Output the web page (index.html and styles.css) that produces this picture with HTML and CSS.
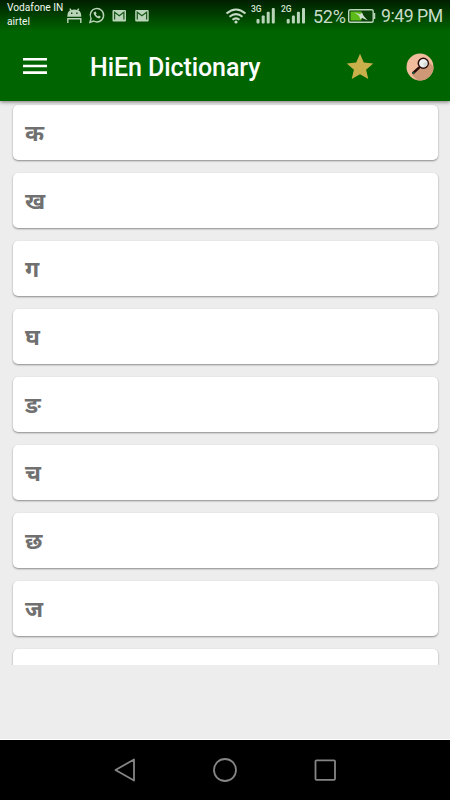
FILE: index.html
```html
<!DOCTYPE html>
<html lang="hi">
<head>
<meta charset="utf-8">
<title>HiEn Dictionary</title>
<link rel="stylesheet" href="styles.css">
</head>
<body>
<div class="phone">
  <header class="top">
    <div class="status">
      <div class="carrier"><span>Vodafone IN</span><span>airtel</span></div>
      <svg class="notices" width="90" height="32" viewBox="0 0 90 32" fill="none" stroke="#b9d4b9" stroke-width="1.4">
        <path d="M5 16C5 12 7.500 10.300 11.300 10.300s6.300 1.700 6.300 5.700z" fill="#b9d4b9"/>
        <path d="M6.800 8.600l1.700 2.400M15.800 8.600l-1.700 2.400M4.800 23v-4.200h13V23"/>
        <path d="M8.700 12.500v1.600M13.900 12.500v1.600" stroke="#0a460a"/>
        <path d="M27 22.300l1.100-3.800a6.700 6.700 0 1 1 2.500 2.500z"/>
        <path d="M30.800 12.200c-1.200 2 3.600 7 6 6l1-1.500-2-1.100-1 .8-2-2 .8-1-1-2z" fill="#b9d4b9" stroke="none"/>
        <g id="mail"><rect x="49.500" y="10" width="13.500" height="11.500" rx="1" fill="#b9d4b9" stroke="none"/><path d="M51.600 19.500v-7.300l4.650 3.600 4.650-3.600v7.300" stroke="#1a5a1a" stroke-width="1.250"/></g>
        <use href="#mail" x="22.700"/>
      </svg>
      <div class="gap"></div>
      <svg class="signals" width="84" height="32" viewBox="0 0 84 32">
        <g fill="none" stroke="#c7dcc7" stroke-width="2"><path d="M1.500 13.500Q11 5.500 20.500 13.500M4.500 16.700Q11 11.500 17.500 16.700M7.500 19.700Q11 17 14.500 19.700"/></g>
        <circle cx="11" cy="22" r="1.600" fill="#c7dcc7"/>
        <g id="bars" fill="#b9d4b9"><rect x="31.500" y="19" width="3" height="4.500" rx="1"/><rect x="36.700" y="15.500" width="3" height="8" rx="1"/><rect x="41.700" y="11.800" width="3" height="11.700" rx="1"/><rect x="46.800" y="8" width="3" height="15.500" rx="1"/></g>
        <use href="#bars" x="30.200"/>
        <g class="net"><text x="26" y="11.500">3G</text><text x="56" y="11.500">2G</text></g>
      </svg>
      <span class="percent">52%</span>
      <svg class="battery" width="29" height="32" viewBox="0 0 29 32">
        <rect x="1.700" y="9.700" width="24.500" height="12.600" rx="1.500" fill="#084008" stroke="#b9d4b9" stroke-width="1.400"/>
        <path d="M27.500 13v6" stroke="#b9d4b9" stroke-width="1.500"/>
        <rect x="3.500" y="11.500" width="11" height="9" fill="#5dbb19"/>
        <path d="M7.500 12.500l5.500 1.700 2-1.700 1.700 3.500 4 4.500-5.500-2.500-1.700 1.200-1.500-3.500z" fill="#d0dfd0"/>
      </svg>
      <span class="clock">9:49 PM</span>
    </div>
    <div class="toolbar">
      <svg class="menu" width="24" height="18" viewBox="0 0 24 18" fill="#fff"><path d="M0 0h24v2.600H0zM0 6.700h24v2.600H0zM0 13.300h24V16H0z"/></svg>
      <h1>HiEn Dictionary</h1>
      <svg class="star" width="28" height="28" viewBox="0 0 28 28"><path fill="#c9b04b" d="M14 .8l3.800 8.800 9.400.9-7.100 6.300 2.200 9.300L14 21.300l-8.300 4.800 2.200-9.300L.8 10.500l9.400-.9z"/></svg>
      <svg class="search" width="28" height="28" viewBox="0 0 28 28">
        <defs><clipPath id="disc"><circle cx="14" cy="14" r="13.500"/></clipPath></defs>
        <circle cx="14" cy="14" r="13.500" fill="#f2bd9c"/>
        <path clip-path="url(#disc)" d="M21 7l9 9v14H14l-8-8z" fill="#cd9875"/>
        <path d="M13 14.700l-5.800 5.300" stroke="#2b0c0a" stroke-width="2.400" stroke-linecap="round"/>
        <path d="M6.800 20.500l1.400-1.300" stroke="#176442" stroke-width="2"/>
        <circle cx="17.300" cy="10.300" r="5" fill="#edf1ee" stroke="#2b0c0a" stroke-width="1.500"/>
        <path d="M17.300 10.300l4-1.700v3.500l-3.500 2.500z" fill="#d5dbd8"/>
      </svg>
    </div>
  </header>
  <main class="list">
    <div class="card">क</div>
    <div class="card">ख</div>
    <div class="card">ग</div>
    <div class="card">घ</div>
    <div class="card">ङ</div>
    <div class="card">च</div>
    <div class="card">छ</div>
    <div class="card">ज</div>
    <div class="card"></div>
  </main>
  <div class="blank"></div>
  <nav class="nav">
    <svg width="24" height="26" viewBox="0 0 24 26"><path d="M21 2.500v21L2.500 13z"/></svg>
    <svg width="26" height="26" viewBox="0 0 26 26"><circle cx="13" cy="13" r="11"/></svg>
    <svg width="24" height="26" viewBox="0 0 24 26"><rect x="2.500" y="3.300" width="19.500" height="19.500" rx="1"/></svg>
  </nav>
</div>
</body>
</html>
```
FILE: styles.css
```css
* { box-sizing: border-box; }
body { margin: 0; background: #ededed; font-family: Roboto, "Noto Sans", sans-serif; }
svg { display: block; flex: none; }
.phone { width: 450px; height: 800px; display: flex; flex-direction: column; overflow: hidden; }
.top {
  position: relative;
  flex: none;
  height: 101px;
  background: linear-gradient(#001f00, #006500 32px);
  box-shadow: 0 1px 4px rgba(0, 0, 0, .5);
}
.status { display: flex; height: 32px; color: #c7dcc7; white-space: nowrap; }
.carrier {
  display: flex;
  flex-direction: column;
  width: 56px;
  margin-left: 7px;
  padding-top: 1px;
  font-size: 10.200px;
  line-height: 13.500px;
  color: #f2f7f2;
}
.gap { flex: 1; }
.signals { margin-right: 4px; }
.net { font-size: 8.500px; font-weight: 500; fill: #d7e6d7; }
.percent { width: 34px; font-size: 18px; letter-spacing: -.3px; line-height: 33px; }
.clock { width: 61px; margin: 0 8px 0 5px; font-size: 17.700px; letter-spacing: -.5px; line-height: 33px; }
.toolbar { display: flex; align-items: center; height: 69px; padding: 0 16px 0 23px; }
h1 { margin: 3px auto 0 43px; color: #fff; font-size: 25px; letter-spacing: -.08px; font-weight: 500; line-height: 32px; }
.star { margin-right: 32px; }
.list {
  display: flex;
  flex-direction: column;
  gap: 13px;
  height: 564px;
  padding: 4px 12.500px 0;
  overflow: hidden;
}
.card {
  flex: none;
  height: 55px;
  padding-left: 12.500px;
  border-radius: 5px;
  background: #fff;
  box-shadow: 0 1px 2px rgba(0, 0, 0, .42);
  color: #707070;
  font-size: 23px;
  font-weight: 700;
  line-height: 58px;
}
.blank { height: 75px; border-bottom: 1px solid #fff; }
.nav { display: flex; justify-content: space-between; align-items: center; height: 60px; padding: 0 113px; background: #000; }
.nav svg { fill: none; stroke: #858585; stroke-width: 1.800; stroke-linejoin: round; }
```
